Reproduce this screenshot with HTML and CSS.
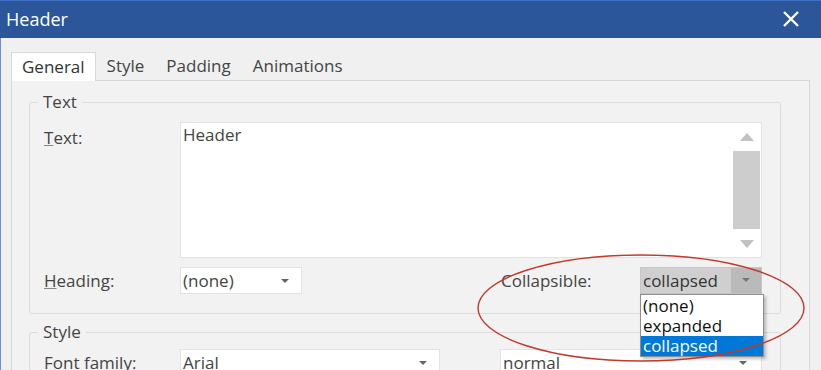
FILE: index.html
```html
<!DOCTYPE html>
<html lang="en">
<head>
    <meta charset="UTF-8">
    <title>Header</title>
    <link rel="stylesheet" href="styles.css">
</head>
<body>

    <div class="window">
        <div class="titlebar">
            <span class="title">Header</span>
            <svg class="close" width="18" height="18" viewBox="0 0 18 18">
                <path d="M2 2 L16 16 M16 2 L2 16" stroke="#fff" stroke-width="2.4" fill="none"/>
            </svg>
        </div>

        <div class="dialog">
            <div class="tabs">
                <div class="tab active">General</div>
                <div class="tab">Style</div>
                <div class="tab">Padding</div>
                <div class="tab">Animations</div>
            </div>

            <div class="panel">
                <fieldset class="group">
                    <legend>Text</legend>

                    <div class="row row-text">
                        <label class="field-label"><u>T</u>ext:</label>
                        <div class="textbox">
                            <div class="textbox-value">Header</div>
                            <div class="scrollbar">
                                <span class="arrow-up"></span>
                                <span class="thumb"></span>
                                <span class="arrow-down"></span>
                            </div>
                        </div>
                    </div>

                    <div class="row">
                        <label class="field-label"><u>H</u>eading:</label>
                        <div class="select">(none)<span class="caret"></span></div>
                        <label class="field-label label-right">Collapsible:</label>
                        <div class="select select-open">
                            collapsed
                            <span class="caret-box"><span class="caret"></span></span>
                            <!-- открытый список -->
                            <ul class="dropdown">
                                <li>(none)</li>
                                <li>expanded</li>
                                <li class="selected">collapsed</li>
                            </ul>
                        </div>
                    </div>
                </fieldset>

                <fieldset class="group group-style">
                    <legend>Style</legend>
                    <div class="row">
                        <label class="field-label"><u>F</u>ont family:</label>
                        <div class="select select-font">Arial<span class="caret"></span></div>
                        <div class="select select-weight">normal<span class="caret"></span></div>
                    </div>
                </fieldset>
            </div>
        </div>

        <!-- красный овал поверх -->
        <svg class="mark" width="821" height="370" viewBox="0 0 821 370">
            <ellipse cx="641" cy="308" rx="163" ry="53" fill="none" stroke="#c0392b" stroke-width="1.4"/>
        </svg>
    </div>

</body>
</html>
```

FILE: styles.css
```css
body {
    margin: 0;
    padding: 0;
    background-color: #f0f0f0;
    font-family: 'Open Sans', 'Noto Sans', sans-serif;
    color: #3c3c3c;
    height: 370px;
    overflow: hidden;
}

.window {
    position: relative;
    height: 370px;
    border-left: 1px solid #6a8fd8;
    box-sizing: border-box;
}

.titlebar {
    height: 38px;
    margin-left: -1px;
    background-color: #2b579a;
    border-top: 1px solid #3d6fc6;
    box-sizing: border-box;
    display: flex;
    align-items: center;
    justify-content: space-between;
    padding: 0 21px 1px 6px;
}

.title {
    color: #fff;
    font-size: 18px;
}

.close {
    display: block;
}

.dialog {
    padding: 14px 10px 0 10px;
}

/* Вкладки */
.tabs {
    display: flex;
    height: 29px;
    margin-bottom: -1px;
    position: relative;
    z-index: 1;
}

.tab {
    font-size: 17px;
    line-height: 27px;
    padding: 0 11px;
    color: #444;
}

.tab.active {
    background: #fff;
    border: 1px solid #d9d9d9;
    border-bottom: none;
    padding: 0 10px;
    height: 29px;
    box-sizing: border-box;
    color: #333;
}

.panel {
    border: 1px solid #d7d7d7;
    width: 799px;
    box-sizing: border-box;
    height: 300px;
    padding: 11px 28px 0 17px;
    background: #f2f2f2;
}

/* Группы */
.group {
    margin: 0;
    padding: 10px 18px 19px 14px;
    border: 1px solid #dcdcdc;
    border-radius: 3px;
    min-width: 0;
}

.group legend {
    font-size: 17px;
    line-height: 20px;
    padding: 0 5px;
    margin-left: -6px;
    color: #444;
}

.group-style {
    margin-top: 8px;
    padding-top: 7px;
}

.row {
    display: flex;
    align-items: center;
}

.row + .row {
    margin-top: 9px;
}

.row-text {
    align-items: flex-start;
}

.field-label {
    width: 136px;
    flex-shrink: 0;
    font-size: 17px;
    color: #444;
}

.field-label u {
    text-decoration-color: #888;
}

.row-text .field-label {
    padding-top: 4px;
}

.label-right {
    margin-left: 199px;
    width: 139px;
}

/* Поле текста */
.textbox {
    flex: 1;
    height: 136px;
    background: #fff;
    border: 1px solid #e2e2e2;
    box-sizing: border-box;
    display: flex;
}

.textbox-value {
    flex: 1;
    font-size: 17px;
    padding: 1px 2px;
    line-height: 22px;
    color: #444;
}

.scrollbar {
    width: 27px;
    margin-right: 1px;
    display: flex;
    flex-direction: column;
    align-items: center;
}

.arrow-up,
.arrow-down {
    width: 0;
    height: 0;
    border-left: 7px solid transparent;
    border-right: 7px solid transparent;
}

.arrow-up {
    border-bottom: 8px solid #c2c2c2;
    margin-top: 10px;
}

.arrow-down {
    border-top: 8px solid #c2c2c2;
    margin-top: 11px;
}

.thumb {
    width: 27px;
    height: 78px;
    background: #cdcdcd;
    margin-top: 10px;
}

/* Выпадающие списки */
.select {
    position: relative;
    width: 122px;
    height: 27px;
    box-sizing: border-box;
    background: #fff;
    border: 1px solid #e3e3e3;
    font-size: 17px;
    line-height: 24px;
    padding-left: 2px;
    color: #444;
    display: flex;
    align-items: center;
}

.caret {
    position: absolute;
    right: 12px;
    top: 11px;
    width: 0;
    height: 0;
    border-left: 4px solid transparent;
    border-right: 4px solid transparent;
    border-top: 4px solid #666;
}

.select-open {
    background: #cfcfcf;
    border-color: #c6c6c6;
    color: #333;
}

.caret-box {
    position: absolute;
    right: 0;
    top: 0;
    width: 30px;
    height: 25px;
    background: #bababa;
}

.caret-box .caret {
    right: 11px;
    top: 10px;
    border-top-color: #777;
}

.dropdown {
    position: absolute;
    left: -1px;
    top: 26px;
    width: 124px;
    box-sizing: border-box;
    margin: 0;
    padding: 1px 0 0 0;
    list-style: none;
    background: #fff;
    border: 1px solid #8f8f8f;
    box-shadow: 2px 2px 3px rgba(0, 0, 0, 0.25);
    z-index: 2;
    color: #111;
}

.dropdown li {
    height: 20px;
    line-height: 20px;
    padding-left: 2px;
}

.dropdown li.selected {
    background: #0078d7;
    color: #fff;
}

.select-font {
    width: 260px;
}

.select-weight {
    width: 262px;
    margin-left: 60px;
}

.select-weight .caret {
    right: 14px;
}

.mark {
    position: absolute;
    left: -1px;
    top: 0;
    pointer-events: none;
    z-index: 3;
}
```
